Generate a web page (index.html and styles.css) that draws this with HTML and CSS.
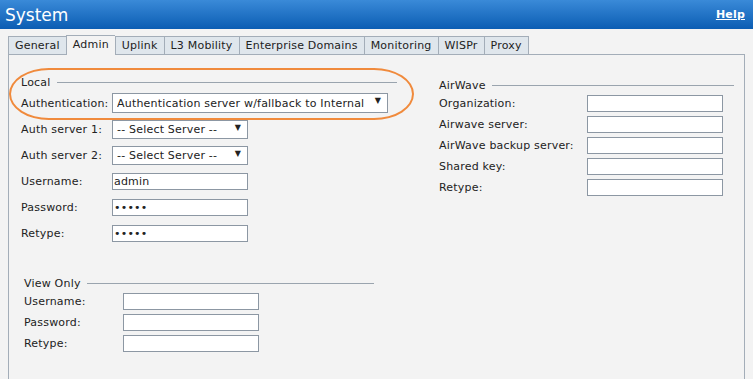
FILE: index.html
```html
<!DOCTYPE html>
<html lang="en">
<head>
  <meta charset="UTF-8">
  <title>System</title>
  <link rel="stylesheet" href="styles.css">
</head>
<body>

<header class="titlebar">
  <h1>System</h1>
  <a href="#" class="help">Help</a>
</header>

<nav class="tabs">
  <div class="tab">General</div>
  <div class="tab active">Admin</div>
  <div class="tab">Uplink</div>
  <div class="tab">L3 Mobility</div>
  <div class="tab">Enterprise Domains</div>
  <div class="tab">Monitoring</div>
  <div class="tab">WISPr</div>
  <div class="tab">Proxy</div>
</nav>

<main class="panel">
  <div class="col-left">
    <section class="group local">
      <div class="legend">Local</div>
      <div class="row">
        <label>Authentication:</label>
        <span class="select wide">
          <select><option>Authentication server w/fallback to Internal</option></select>
        </span>
      </div>
      <div class="row">
        <label>Auth server 1:</label>
        <span class="select">
          <select><option>-- Select Server --</option></select>
        </span>
      </div>
      <div class="row">
        <label>Auth server 2:</label>
        <span class="select">
          <select><option>-- Select Server --</option></select>
        </span>
      </div>
      <div class="row">
        <label>Username:</label>
        <input type="text" value="admin">
      </div>
      <div class="row">
        <label>Password:</label>
        <input type="password" value="admin">
      </div>
      <div class="row">
        <label>Retype:</label>
        <input type="password" value="admin">
      </div>
    </section>

    <section class="group viewonly">
      <div class="legend">View Only</div>
      <div class="row small">
        <label>Username:</label>
        <input type="text">
      </div>
      <div class="row small">
        <label>Password:</label>
        <input type="text">
      </div>
      <div class="row small">
        <label>Retype:</label>
        <input type="text">
      </div>
    </section>
  </div>

  <div class="col-right">
    <section class="group airwave">
      <div class="legend">AirWave</div>
      <div class="row small">
        <label>Organization:</label>
        <input type="text">
      </div>
      <div class="row small">
        <label>Airwave server:</label>
        <input type="text">
      </div>
      <div class="row small">
        <label>AirWave backup server:</label>
        <input type="text">
      </div>
      <div class="row small">
        <label>Shared key:</label>
        <input type="text">
      </div>
      <div class="row small">
        <label>Retype:</label>
        <input type="text">
      </div>
    </section>
  </div>

  <div class="highlight"></div>
</main>

</body>
</html>
```

FILE: styles.css
```css
* {
  box-sizing: border-box;
  margin: 0;
  padding: 0;
}

body {
  background-color: #f3f3f3;
  font-family: 'DejaVu Sans', sans-serif;
  font-size: 11px;
  letter-spacing: 0.2px;
  color: #222;
  height: 379px;
  overflow: hidden;
}

.titlebar {
  height: 29px;
  background: linear-gradient(#3a8ad8, #0b5db3);
  display: flex;
  justify-content: space-between;
  align-items: center;
  padding: 0 8px 0 5px;
}

.titlebar h1 {
  font-size: 17px;
  font-weight: normal;
  letter-spacing: 0;
  color: white;
}

.help {
  color: white;
  font-weight: bold;
  font-size: 11px;
}

.tabs {
  display: flex;
  margin: 7px 0 0 8px;
  height: 18px;
}

.tab {
  background-color: #dfe6ec;
  border: 1px solid #a3adb8;
  border-right: none;
  border-bottom: none;
  padding: 0 6px;
  line-height: 17px;
}

.tab:last-child {
  border-right: 1px solid #a3adb8;
}

.tab.active {
  background-color: #f3f3f3;
  margin-top: -1px;
  height: 20px;
  position: relative;
  z-index: 1;
}

.panel {
  position: relative;
  margin-left: 8px;
  width: 737px;
  height: 340px;
  border: 1px solid #a3adb8;
  border-bottom: none;
  display: flex;
}

.col-left {
  width: 410px;
  padding: 20px 0 0 12px;
}

.col-right {
  padding: 23px 0 0 20px;
}

.legend {
  display: flex;
  align-items: center;
  height: 14px;
  margin-bottom: 1px;
}

.legend::after {
  content: "";
  flex: 1;
  border-top: 1px solid #9aa4ae;
  margin-left: 6px;
}

.local {
  width: 376px;
}

.viewonly {
  width: 350px;
  margin: 30px 0 0 3px;
}

.airwave {
  width: 295px;
}

.row {
  display: flex;
  align-items: center;
  height: 26px;
}

.row.small {
  height: 21px;
}

.row label {
  width: 91px;
}

.viewonly .row label {
  width: 99px;
}

.airwave .row label {
  width: 148px;
}

input {
  width: 136px;
  height: 17px;
  border: 1px solid #8c97a3;
  background-color: white;
  font-family: 'DejaVu Sans', sans-serif;
  font-size: 11px;
  letter-spacing: 0.2px;
  padding: 0 1px;
  color: #222;
}

.select {
  position: relative;
  display: inline-block;
}

.select select {
  appearance: none;
  width: 136px;
  height: 19px;
  border: 1px solid #8c97a3;
  border-radius: 0;
  background-color: white;
  font-family: 'DejaVu Sans', sans-serif;
  font-size: 11px;
  letter-spacing: 0.2px;
  color: #222;
  padding: 0 4px;
}

.select.wide select {
  width: 276px;
  height: 20px;
}

.select::after {
  content: "\25BC";
  position: absolute;
  right: 7px;
  top: 3px;
  font-size: 8px;
  pointer-events: none;
}

.highlight {
  position: absolute;
  left: 0;
  top: 13px;
  width: 405px;
  height: 52px;
  border: 2.5px solid #f08a3c;
  border-radius: 40px / 26px;
  pointer-events: none;
}
```
